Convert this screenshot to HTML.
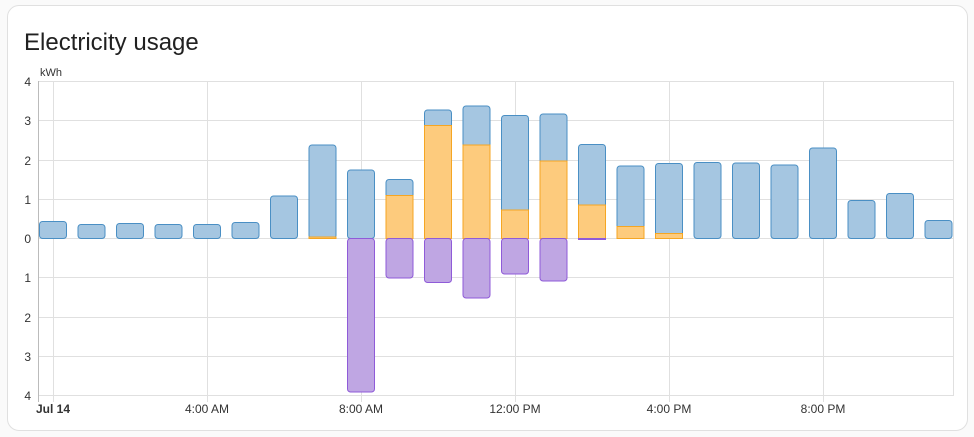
<!DOCTYPE html>
<html><head><meta charset="utf-8"><style>
html,body{margin:0;padding:0;background:#fafafa;width:974px;height:437px;overflow:hidden;font-family:"Liberation Sans",sans-serif;}
.card{position:absolute;left:7px;top:5px;width:961px;height:426px;background:#fff;border:1px solid #e0e0e0;border-radius:12px;box-sizing:border-box;}
h1{position:absolute;left:24px;top:27px;margin:0;font-size:24px;font-weight:400;color:#212121;line-height:32px;}
svg{position:absolute;left:0;top:0;}
</style></head><body>
<div class="card"></div>
<h1>Electricity usage</h1>
<svg width="974" height="437" font-family="Liberation Sans, sans-serif" font-size="12" fill="#333">
<g stroke="#e0e0e0" stroke-width="1">
<line x1="38" y1="81.5" x2="953" y2="81.5"/><line x1="38" y1="120.5" x2="953" y2="120.5"/><line x1="38" y1="160.5" x2="953" y2="160.5"/><line x1="38" y1="199.5" x2="953" y2="199.5"/><line x1="38" y1="238.5" x2="953" y2="238.5"/><line x1="38" y1="277.5" x2="953" y2="277.5"/><line x1="38" y1="317.5" x2="953" y2="317.5"/><line x1="38" y1="356.5" x2="953" y2="356.5"/><line x1="38" y1="395.5" x2="953" y2="395.5"/>
<line x1="953.5" y1="81" x2="953.5" y2="396"/>
<line x1="53.5" y1="81" x2="53.5" y2="402"/><line x1="207.5" y1="81" x2="207.5" y2="402"/><line x1="361.5" y1="81" x2="361.5" y2="402"/><line x1="515.5" y1="81" x2="515.5" y2="402"/><line x1="669.5" y1="81" x2="669.5" y2="402"/><line x1="823.5" y1="81" x2="823.5" y2="402"/>
</g>
<line x1="38.5" y1="81" x2="38.5" y2="402" stroke="#bbb"/>
<g text-anchor="end"><text x="31" y="86">4</text><text x="31" y="125">3</text><text x="31" y="165">2</text><text x="31" y="204">1</text><text x="31" y="243">0</text><text x="31" y="282">1</text><text x="31" y="322">2</text><text x="31" y="361">3</text><text x="31" y="400">4</text></g>
<text x="40" y="76" font-size="11">kWh</text>
<g text-anchor="middle"><text x="53" y="413" font-weight="bold">Jul 14</text><text x="207" y="413">4:00 AM</text><text x="361" y="413">8:00 AM</text><text x="515" y="413">12:00 PM</text><text x="669" y="413">4:00 PM</text><text x="823" y="413">8:00 PM</text></g>
<g fill="#a5c6e1" stroke="#4a8fc4" stroke-width="1">
<rect x="39.5" y="221.5" width="27" height="17" rx="3"/>
<rect x="78" y="224.5" width="27" height="14" rx="3"/>
<rect x="116.5" y="223.5" width="27" height="15" rx="3"/>
<rect x="155" y="224.5" width="27" height="14" rx="3"/>
<rect x="193.5" y="224.5" width="27" height="14" rx="3"/>
<rect x="232" y="222.5" width="27" height="16" rx="3"/>
<rect x="270.5" y="196" width="27" height="42.5" rx="3"/>
<rect x="309" y="145" width="27" height="93.5" rx="3"/>
<rect x="347.5" y="170" width="27" height="68.5" rx="3"/>
<rect x="386" y="179.5" width="27" height="59" rx="3"/>
<rect x="424.5" y="110" width="27" height="128.5" rx="3"/>
<rect x="463" y="106" width="27" height="132.5" rx="3"/>
<rect x="501.5" y="115.5" width="27" height="123" rx="3"/>
<rect x="540" y="114" width="27" height="124.5" rx="3"/>
<rect x="578.5" y="144.5" width="27" height="94" rx="3"/>
<rect x="617" y="166" width="27" height="72.5" rx="3"/>
<rect x="655.5" y="163.5" width="27" height="75" rx="3"/>
<rect x="694" y="162.5" width="27" height="76" rx="3"/>
<rect x="732.5" y="163" width="27" height="75.5" rx="3"/>
<rect x="771" y="165" width="27" height="73.5" rx="3"/>
<rect x="809.5" y="148" width="27" height="90.5" rx="3"/>
<rect x="848" y="200.5" width="27" height="38" rx="3"/>
<rect x="886.5" y="193.5" width="27" height="45" rx="3"/>
<rect x="925" y="220.5" width="27" height="18" rx="3"/>
</g>
<g fill="#fdcb7d" stroke="#f5a623" stroke-width="1">
<rect x="309" y="237" width="27" height="1.5"/>
<rect x="386" y="195.5" width="27" height="43"/>
<rect x="424.5" y="125.5" width="27" height="113"/>
<rect x="463" y="145" width="27" height="93.5"/>
<rect x="501.5" y="210" width="27" height="28.5"/>
<rect x="540" y="161" width="27" height="77.5"/>
<rect x="578.5" y="205" width="27" height="33.5"/>
<rect x="617" y="226.5" width="27" height="12"/>
<rect x="655.5" y="233.5" width="27" height="5"/>
</g>
<g fill="#bfa6e3" stroke="#8f5bd8" stroke-width="1">
<rect x="347.5" y="238.5" width="27" height="153.5" rx="3"/>
<rect x="386" y="238.5" width="27" height="39.5" rx="3"/>
<rect x="424.5" y="238.5" width="27" height="44" rx="3"/>
<rect x="463" y="238.5" width="27" height="59.5" rx="3"/>
<rect x="501.5" y="238.5" width="27" height="35.5" rx="3"/>
<rect x="540" y="238.5" width="27" height="42.5" rx="3"/>
<rect x="578.5" y="238.5" width="27" height="1"/>
</g>
</svg>
</body></html>
